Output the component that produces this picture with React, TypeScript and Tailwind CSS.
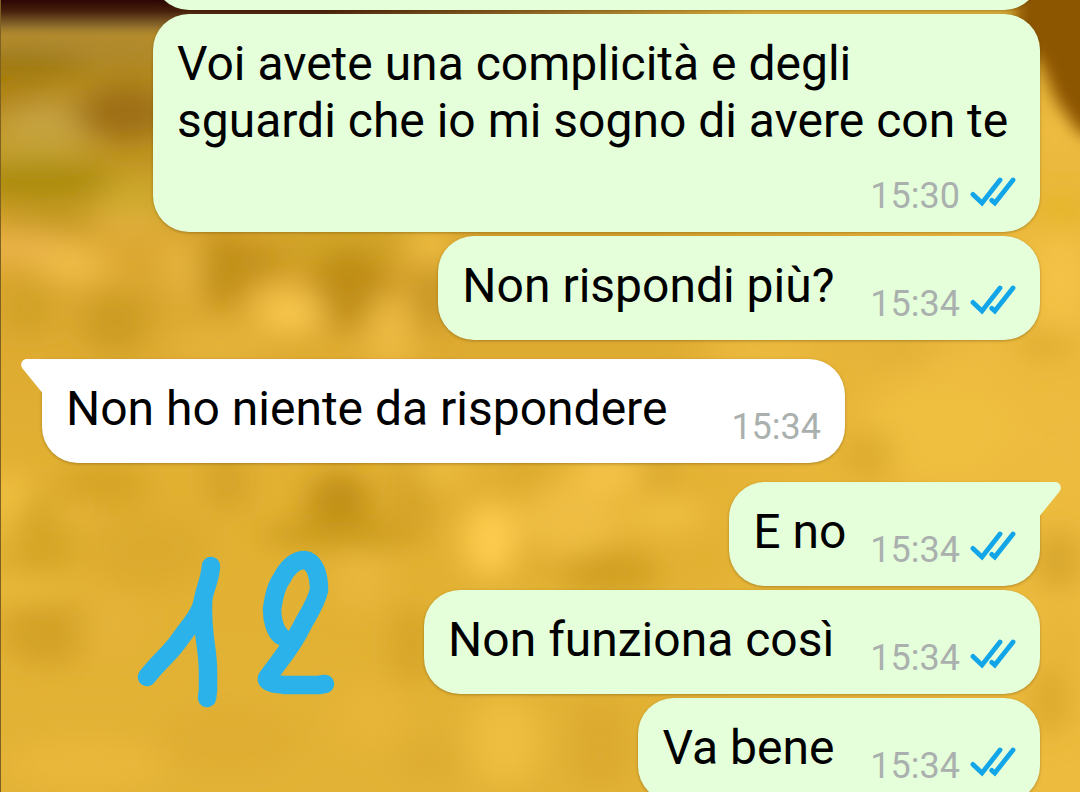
import clsx from "clsx";

type Message = {
  id: number;
  text: string;
  time: string;
  outgoing: boolean;
  tail?: boolean;
  stacked?: boolean;
  gap: string;
};

const MESSAGES: Message[] = [
  {
    id: 1,
    text: "Voi avete una complicità e degli sguardi che io mi sogno di avere con te",
    time: "15:30",
    outgoing: true,
    stacked: true,
    gap: "gap-px",
  },
  { id: 2, text: "Non rispondi più?", time: "15:34", outgoing: true, gap: "gap-9" },
  { id: 3, text: "Non ho niente da rispondere", time: "15:34", outgoing: false, tail: true, gap: "gap-16" },
  { id: 4, text: "E no", time: "15:34", outgoing: true, tail: true, gap: "gap-6" },
  { id: 5, text: "Non funziona così", time: "15:34", outgoing: true, gap: "gap-9" },
  { id: 6, text: "Va bene", time: "15:34", outgoing: true, gap: "gap-9" },
];

// [cx, cy, rx, ry, color]
const BLOTCHES: [number, number, number, number, string][] = [
  [60, 46, 120, 18, "#b08a30"],
  [10, 66, 90, 12, "#987400"],
  [130, 70, 50, 14, "#b0871c"],
  [10, 97, 60, 10, "#ab7e0c"],
  [50, 125, 50, 24, "#c6a240"],
  [125, 113, 50, 28, "#9f7012"],
  [30, 150, 60, 12, "#c5a232"],
  [40, 181, 80, 20, "#ac8c0a"],
  [135, 198, 40, 20, "#cca82a"],
  [60, 218, 60, 12, "#c49a22"],
  [10, 248, 70, 14, "#ecb44c"],
  [130, 225, 40, 14, "#e2b03c"],
  [73, 265, 36, 20, "#edbb46"],
  [27, 307, 28, 30, "#d1a227"],
  [115, 322, 34, 32, "#cc9c22"],
  [183, 270, 22, 30, "#e8b640"],
  [158, 290, 8, 30, "#d3a22a"],
  [223, 270, 24, 40, "#c08f18"],
  [263, 260, 24, 20, "#c4931e"],
  [340, 247, 70, 16, "#cda222"],
  [350, 290, 42, 40, "#bf8d18"],
  [430, 243, 20, 20, "#efc042"],
  [430, 300, 16, 34, "#c39320"],
  [290, 312, 34, 24, "#f6c54c"],
  [390, 332, 24, 38, "#edbb42"],
  [220, 345, 50, 16, "#e5b43a"],
  [760, 350, 60, 10, "#f0c043"],
  [920, 350, 60, 14, "#e1b035"],
  [970, 360, 50, 14, "#eebc40"],
  [940, 430, 80, 50, "#efbf41"],
  [868, 455, 24, 26, "#dcab2e"],
  [8, 510, 16, 40, "#f4c445"],
  [42, 540, 34, 44, "#d5a627"],
  [105, 485, 46, 24, "#d6a528"],
  [75, 514, 20, 12, "#e7b63a"],
  [227, 482, 20, 32, "#d3a225"],
  [150, 550, 60, 40, "#dcab2d"],
  [339, 508, 32, 38, "#c08f12"],
  [340, 535, 80, 14, "#cc9c1f"],
  [412, 500, 20, 50, "#d3a227"],
  [440, 470, 24, 18, "#edbd40"],
  [491, 540, 26, 38, "#ffce50"],
  [527, 540, 10, 34, "#d8a72b"],
  [524, 474, 10, 18, "#d5a427"],
  [570, 520, 50, 36, "#eebd42"],
  [610, 474, 40, 20, "#f4c346"],
  [655, 475, 14, 20, "#d6a529"],
  [610, 572, 50, 22, "#d1a024"],
  [665, 515, 40, 20, "#eebe41"],
  [705, 560, 20, 24, "#e2b032"],
  [47, 630, 44, 36, "#d3a227"],
  [30, 590, 50, 14, "#e9b93b"],
  [110, 625, 30, 36, "#e4b337"],
  [360, 580, 24, 30, "#e9b83c"],
  [412, 645, 20, 40, "#d5a428"],
  [85, 765, 80, 26, "#e9b83b"],
  [230, 740, 70, 34, "#dfae33"],
  [370, 715, 36, 36, "#e7b639"],
  [430, 760, 34, 26, "#dead32"],
  [505, 740, 36, 46, "#eebe41"],
  [600, 745, 30, 46, "#dbaa2d"],
  [1062, 210, 24, 16, "#e3b528"],
  [1065, 130, 20, 24, "#f0be42"],
  [1060, 280, 24, 50, "#f4c347"],
  [1045, 345, 30, 16, "#e0af33"],
  [1055, 440, 30, 30, "#edbc40"],
  [1058, 560, 22, 32, "#d6a529"],
  [1062, 640, 20, 30, "#e6b539"],
  [1050, 700, 18, 36, "#d9a82c"],
];

function Wallpaper() {
  return (
    <svg
      className="absolute inset-0 size-full"
      viewBox="0 0 1080 792"
      preserveAspectRatio="none"
      aria-hidden="true"
    >
      <defs>
        <linearGradient id="wall" x1="0" y1="0" x2="0" y2="1">
          <stop offset="0" stopColor="#b78b20" />
          <stop offset="0.2" stopColor="#c09522" />
          <stop offset="0.31" stopColor="#dba630" />
          <stop offset="0.6" stopColor="#e2b133" />
          <stop offset="1" stopColor="#e2b236" />
        </linearGradient>
        <linearGradient id="glow" x1="0" y1="0" x2="1" y2="0">
          <stop offset="0.6" stopColor="#eebc3f" stopOpacity="0" />
          <stop offset="0.9" stopColor="#eebc3f" stopOpacity="0.9" />
        </linearGradient>
        <linearGradient id="dusk" x1="0" y1="0" x2="0" y2="1">
          <stop offset="0" stopColor="#2c0604" />
          <stop offset="0.3" stopColor="#48200c" />
          <stop offset="0.65" stopColor="#80602a" stopOpacity="0.9" />
          <stop offset="1" stopColor="#a88638" stopOpacity="0" />
        </linearGradient>
        <linearGradient id="seam" x1="0" y1="0" x2="1" y2="0">
          <stop offset="0.3" stopColor="#dcb03c" stopOpacity="0" />
          <stop offset="0.7" stopColor="#dcb03c" />
        </linearGradient>
        <filter id="soft" x="-10%" y="-10%" width="120%" height="120%">
          <feGaussianBlur stdDeviation="16 13" />
        </filter>
        <filter id="edge" x="-50%" y="-50%" width="200%" height="200%">
          <feGaussianBlur stdDeviation="8" />
        </filter>
      </defs>
      <rect width="1080" height="792" fill="url(#wall)" />
      <rect width="1080" height="792" fill="url(#glow)" />
      <g filter="url(#soft)">
        {BLOTCHES.map(([cx, cy, rx, ry, fill]) => (
          <ellipse key={`${cx}-${cy}`} cx={cx} cy={cy} rx={rx} ry={ry} fill={fill} />
        ))}
      </g>
      <rect width="1080" height="38" fill="url(#dusk)" />
      <rect width="1080" height="20" fill="url(#seam)" />
      <path d="M1015 -30H1110V146L1078 132L1056 100L1040 62L1015 40Z" fill="#8c5503" filter="url(#edge)" />
      <rect width="1" height="792" fill="#7d6120" />
    </svg>
  );
}

function ReadTicks() {
  return (
    <svg className="mb-2 h-[30px] w-[46px] shrink-0" viewBox="0 0 46 30" role="img" aria-label="Letto">
      <g fill="none" stroke="#12a5e8" strokeWidth="4.8" strokeLinecap="round">
        <path d="M3 17.400L12 26L30 3" />
        <path d="M21.800 23.400L24.800 26L43 3" />
      </g>
    </svg>
  );
}

function Tail({ outgoing }: { outgoing: boolean }) {
  return (
    <svg
      className={clsx(
        "absolute top-0 h-[34px] w-[22px]",
        outgoing ? "-right-[21px] -scale-x-100 text-[#e5ffdb]" : "-left-[21px] text-white"
      )}
      viewBox="0 0 22 34"
      aria-hidden="true"
    >
      <path d="M22 0H6C1 0 -1.500 5.500 1.500 9.500L21 33.500H22Z" fill="currentColor" />
    </svg>
  );
}

function Bubble({ message }: { message: Message }) {
  const { text, time, outgoing, tail, stacked, gap } = message;

  return (
    <li
      className={clsx(
        "relative flex rounded-[36px] px-6 pt-[21px] shadow-[0_1px_3px_rgba(70,45,0,0.35)]",
        outgoing ? "self-end bg-[#e5ffdb]" : "self-start bg-white",
        tail && "mt-[15px]",
        tail && (outgoing ? "rounded-tr-none" : "rounded-tl-none"),
        stacked && "max-w-[887px] flex-col",
        gap
      )}
    >
      {tail && <Tail outgoing={outgoing} />}
      <p className="pb-[26px] text-[48px] leading-[57px] text-black">{text}</p>
      <div className="mb-4 flex items-center gap-2.5 self-end">
        <time className="text-[36px] leading-10 text-[#a9b0ae]">{time}</time>
        {outgoing && <ReadTicks />}
      </div>
    </li>
  );
}

function HandwrittenNumber() {
  return (
    <svg
      className="absolute top-[540px] left-[130px] h-[180px] w-[220px]"
      viewBox="130 540 220 180"
      role="img"
      aria-label="12"
    >
      <g fill="none" stroke="#2bb2ea" strokeWidth="18.500" strokeLinecap="round" strokeLinejoin="round">
        <path d="M211 566C210 580 205 588 203 600C201 614 189 626 180 639C171 653 158 662 147 677" />
        <path d="M203 600C202 640 208 645 208 672V690L207 698" />
        <path d="M281 636C275 631 272 620 272 609C274 596 276 586 282 578C287 568 295 560 304 560C314 561 319 573 319 590C316 604 307 616 302 626C292 647 279 661 267 678C266 683 275 684 285 685H318L325 684" />
      </g>
    </svg>
  );
}

export default function App() {
  return (
    <main className="relative h-screen overflow-hidden bg-[#e2b133] font-[Roboto,sans-serif]">
      <Wallpaper />
      <ul className="relative flex flex-col gap-1 pr-10 pl-[42px]">
        <li
          className="-mt-[94px] h-[104px] w-[887px] self-end rounded-[36px] bg-[#e5ffdb] shadow-[0_1px_3px_rgba(70,45,0,0.35)]"
          aria-hidden="true"
        />
        {MESSAGES.map((message) => (
          <Bubble key={message.id} message={message} />
        ))}
      </ul>
      <HandwrittenNumber />
    </main>
  );
}
